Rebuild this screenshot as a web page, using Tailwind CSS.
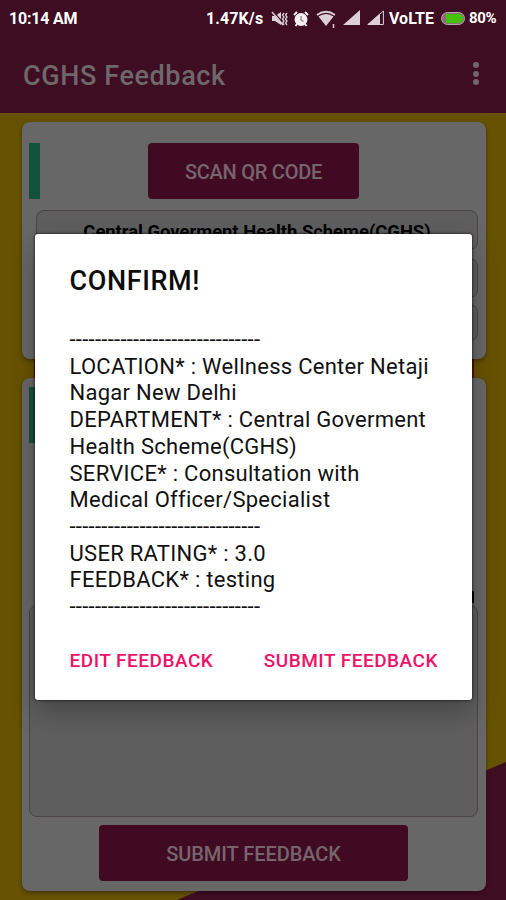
<!DOCTYPE html>
<html lang="en">
<head>
    <meta charset="UTF-8">
    <meta name="viewport" content="width=device-width, initial-scale=1.0">
    <title>CGHS Feedback</title>
    <script src="https://cdn.jsdelivr.net/npm/@tailwindcss/browser@4"></script>
</head>
<body class="relative flex h-[900px] w-[506px] flex-col overflow-hidden bg-[#665200] font-['Roboto',sans-serif]">
    <!-- App bar -->
    <header class="h-[113px] shrink-0 bg-[#3f0d22]">
        <div class="flex h-9 items-center justify-between pl-[9px] pr-2 pt-px text-base font-bold tracking-[-0.2px] text-white">
            <span>10:14 AM</span>
            <div class="flex items-center">
                <span class="w-[65px] whitespace-nowrap tracking-[0.1px]">1.47K/s</span>
                <svg class="h-4 w-[18px]" viewBox="0 0 18 16" fill="none" stroke="#dccfd6">
                    <path d="M1 5h3l6-4v13l-6-4H1z" fill="#dccfd6" stroke="none" />
                    <path d="M2 0l11 13" stroke="#3f0d22" stroke-width="1.200" />
                    <path d="M1 1l11 13" stroke-width="1.400" />
                    <path d="M13 2l-1.500 2 1.500 2-1.500 2 1.500 2-1.500 2 1.500 2M16 2l-1.500 2 1.500 2-1.500 2 1.500 2-1.500 2 1.500 2" stroke-width="1.300" />
                </svg>
                <svg class="ml-1 h-4 w-4" viewBox="0 0 16 16" fill="none">
                    <circle cx="8" cy="8.500" r="6.500" fill="#f4eef1" />
                    <path d="M1 4l3-3M15 4l-3-3M4 13l-1.500 2M12 13l1.500 2" stroke="#f4eef1" stroke-width="2" />
                    <path d="M8 5v4l2.500 1.500" stroke="#8b7480" stroke-width="1.200" />
                </svg>
                <svg class="ml-[7px] h-[18px] w-5" viewBox="0 0 20 18" fill="none">
                    <path d="M1 5Q10-1.500 19 5" stroke="#dccfd6" stroke-width="1.800" />
                    <path d="M2.500 6.500Q10 1.500 17.500 6.500L10 16z" fill="#dccfd6" />
                    <path d="M17.500 14v4" stroke="#dccfd6" stroke-width="1.500" />
                </svg>
                <svg class="-mt-0.5 ml-[7px] h-[15px] w-[17px]" viewBox="0 0 17 15">
                    <path d="M0 15L17 0v15z" fill="#dccfd6" />
                </svg>
                <svg class="-mt-0.5 ml-[7px] h-[15px] w-[17px]" viewBox="0 0 17 15">
                    <path d="M1 14.500L16.400 1v13.500z" fill="none" stroke="#dccfd6" />
                    <path d="M0 15L13 3.500V15z" fill="#dccfd6" />
                </svg>
                <span class="ml-[5px] w-[46px] tracking-[0px]">VoLTE</span>
                <div class="-mt-px ml-[6px] flex h-[13px] w-6 rounded-full border border-[#b9a5ae] bg-[#8b6c79] p-px pl-[4px]">
                    <div class="grow rounded-r-full bg-[#42c404]"></div>
                </div>
                <span class="ml-1 w-[29px] text-[15px] tracking-[-0.4px]">80%</span>
            </div>
        </div>
        <div class="flex h-[77px] items-center justify-between pl-[23px] pr-[27px]">
            <h1 class="pt-[3px] text-[27px] font-medium tracking-[0.6px] text-[#6e686b]">CGHS Feedback</h1>
            <div class="-mt-0.5 flex flex-col gap-[2.500px]">
                <span class="size-1.5 rounded-full bg-[#6e686b]"></span>
                <span class="size-1.5 rounded-full bg-[#6e686b]"></span>
                <span class="size-1.5 rounded-full bg-[#6e686b]"></span>
            </div>
        </div>
    </header>

    <main class="relative flex grow flex-col pl-[22px] pr-5 pt-[9px]">
        <!-- Background shape -->
        <svg class="absolute left-0 top-0 h-[787px] w-[506px]" viewBox="0 113 506 787">
            <path d="M506 762L177 900h329z" fill="#3f0d22" />
            <path d="M34 350h440v35H34z" fill="#651400" />
        </svg>

        <section class="relative h-[237px] rounded-lg bg-[#676767] pt-[21px] shadow-[0_2px_4px_rgba(0,0,0,0.35)]">
            <div class="flex pl-[7px]">
                <div class="h-14 w-[11px] bg-[#12513b]"></div>
                <button class="ml-[108px] h-14 w-[211px] rounded bg-[#400b22] pt-0.5 text-[20px] font-medium tracking-[-0.25px] text-[#77656d]">SCAN QR CODE</button>
            </div>
            <div class="ml-3.5 mr-2 mt-[11px] flex flex-col gap-2">
                <div class="h-10 rounded-lg border border-[#4a4245] bg-[#5e5e5e] pt-[9px] text-center text-[18.400px] font-bold leading-6 text-black">Central Goverment Health Scheme(CGHS)</div>
                <div class="h-10 rounded-lg border border-[#4a4245] bg-[#5e5e5e]"></div>
                <div class="-mt-0.5 h-[37px] rounded-lg border border-[#4a4245] bg-[#5e5e5e]"></div>
            </div>
        </section>

        <section class="relative mt-[19px] h-[513px] rounded-lg bg-[#676767] pl-[7px] pr-2 pt-[9px] shadow-[0_2px_4px_rgba(0,0,0,0.35)]">
            <div class="h-14 w-[11px] bg-[#12513b]"></div>
            <div class="ml-auto mr-[4px] mt-[148px] h-3 w-0.5 bg-black"></div>
            <div class="mt-0.5 h-[212px] rounded-lg border border-[#4a4245] bg-[#5e5e5e]"></div>
            <button class="ml-[70px] mt-2 h-14 w-[309px] rounded bg-[#400b22] pt-0.5 text-[20px] font-medium tracking-[-0.05px] text-[#77656d]">SUBMIT FEEDBACK</button>
        </section>
    </main>

    <!-- Confirm dialog -->
    <div class="absolute left-[35px] top-[234px] h-[466px] w-[437px] rounded-[3px] bg-white pl-[34.500px] pr-[34px] pt-[29px] shadow-[0_12px_24px_rgba(0,0,0,0.25),0_0_3px_rgba(0,0,0,0.9)]">
        <h2 class="text-[27px] font-medium leading-9 tracking-[0.6px] text-[#0c0c0c]">CONFIRM!</h2>
        <div class="mt-7 whitespace-nowrap text-[22px] leading-[26.700px] tracking-[0.28px] text-[#111]">
            <p>------------------------------</p>
            <p>LOCATION* : Wellness Center Netaji</p>
            <p>Nagar New Delhi</p>
            <p>DEPARTMENT* : Central Goverment</p>
            <p>Health Scheme(CGHS)</p>
            <p>SERVICE* : Consultation with</p>
            <p>Medical Officer/Specialist</p>
            <p>------------------------------</p>
            <p>USER RATING* : 3.0</p>
            <p>FEEDBACK* : testing</p>
            <p>------------------------------</p>
        </div>
        <div class="mt-[26px] flex justify-between text-[19px] font-medium tracking-[0.5px] text-[#ee1268]">
            <button>EDIT FEEDBACK</button>
            <button>SUBMIT FEEDBACK</button>
        </div>
    </div>
</body>
</html>
